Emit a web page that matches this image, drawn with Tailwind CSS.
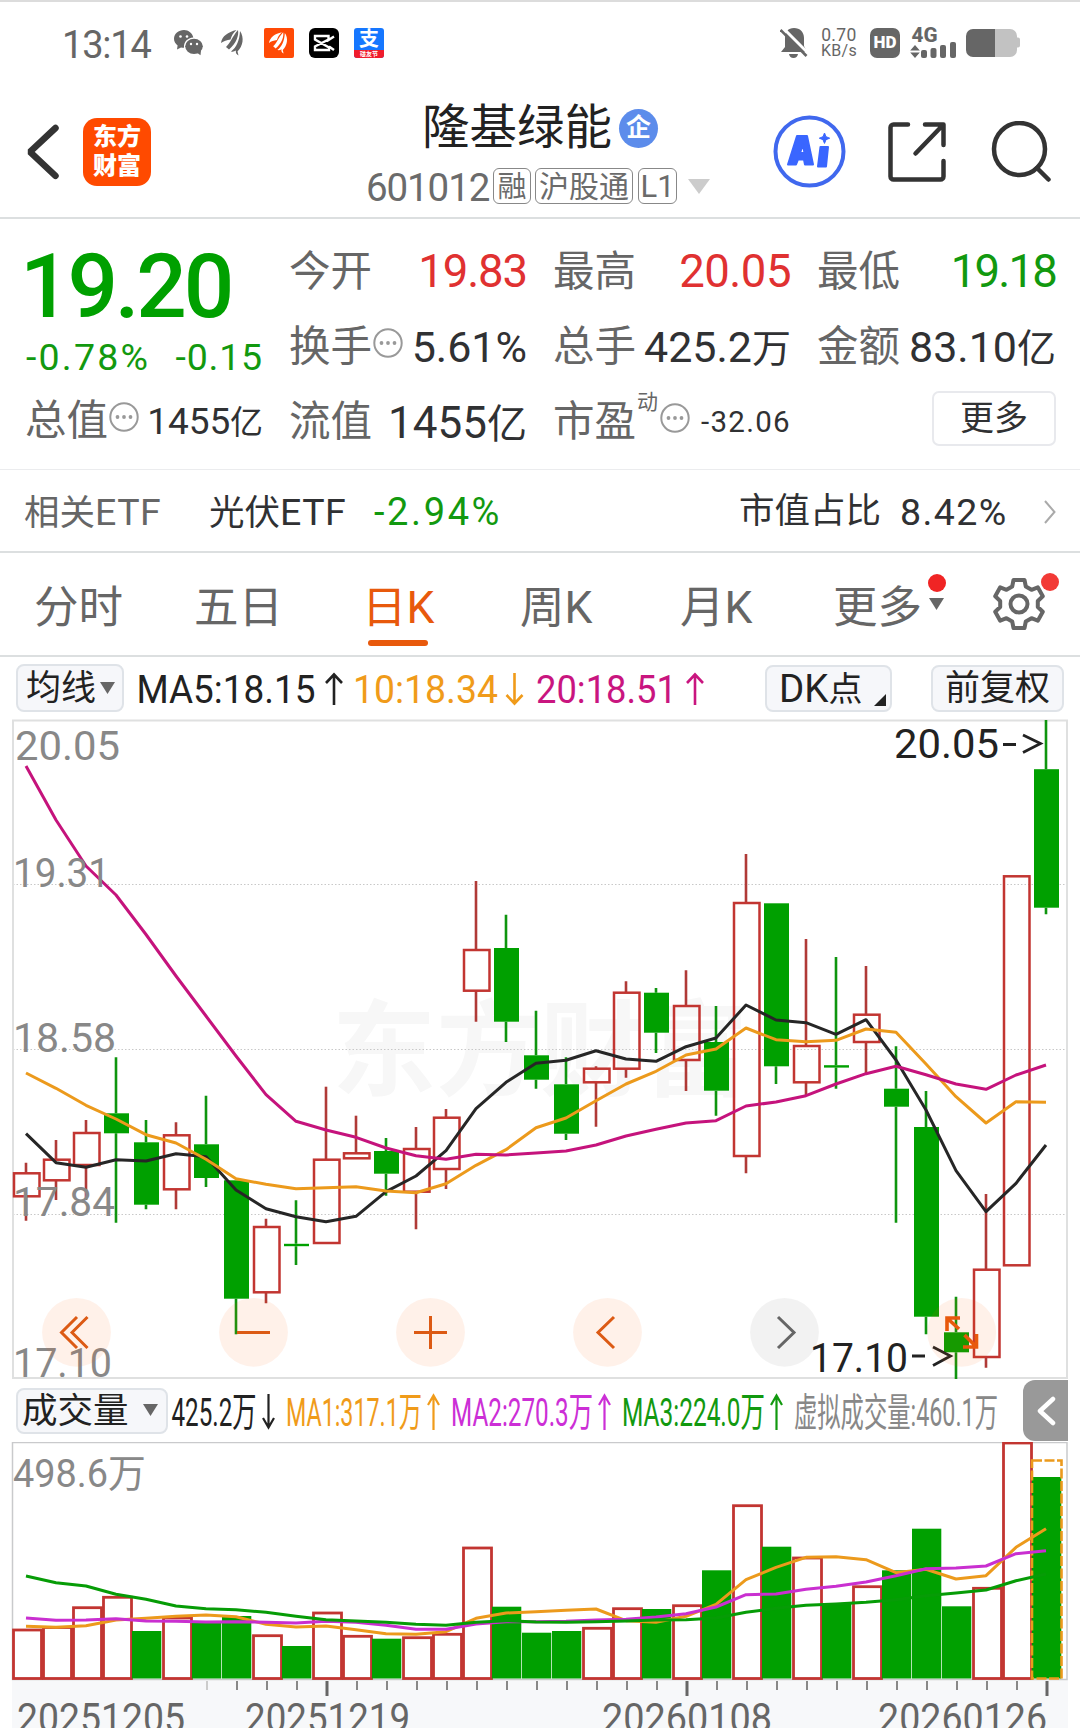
<!DOCTYPE html>
<html lang="zh-CN">
<head>
  <meta charset="UTF-8" />
  <meta name="viewport" content="width=device-width, initial-scale=1.0"/>
  <title>隆基绿能 601012</title>
  <script src="https://cdn.jsdelivr.net/npm/@tailwindcss/browser@4"></script>
</head>
<body class="w-[1080px] h-[1728px] overflow-hidden bg-white [font-family:Roboto,'Noto_Sans_CJK_SC',sans-serif] text-[#303133]">

  <!-- Status bar -->
  <div class="h-[84px] border-t-2 border-[#dcdcdc] flex items-center pl-[62px] pr-[60px] text-[#666]">
    <span class="text-[38px] leading-none tracking-[-1.2px] w-[112px] pt-[3px]">13:14</span>
    <!-- chat -->
    <svg class="w-[29px] h-[26px]" viewBox="0 0 29 26">
      <path fill="#666" d="M10 0C4.500 0 0 3.900 0 8.800c0 2.700 1.400 5 3.600 6.600L3 19.500l4-2.100c1 .3 2 .4 3 .4C9.500 12 13.500 8 19.300 7.600 18.500 3.200 14.500 0 10 0z"/>
      <ellipse cx="20" cy="16.300" rx="8.800" ry="7.600" fill="#666"/>
      <path fill="#666" d="M22 22l4.500 3.300.5-5z"/>
      <g fill="#fff"><circle cx="6.500" cy="6.500" r="1.300"/><circle cx="13" cy="6.500" r="1.300"/><circle cx="17" cy="14" r="1.200"/><circle cx="23" cy="14" r="1.200"/></g>
    </svg>
    <!-- feather -->
    <svg class="w-[24px] h-[26px] ml-[18px]" viewBox="0 0 24 26">
      <g fill="#666"><path d="M0 13C1 6 7 2 15.500 0 12 3 10.500 6 9.500 9.500 6 10 2.500 11 0 13z"/><path d="M5 17C9.500 13 11.500 6 17 0 18 5.500 15.500 13 8 19.500z"/><path d="M10 21.500c5.500-4 8.500-11 9-20.500 4.500 6.500 3 15-2.500 20.500l1 4c-2-1-3.200-3-2.500-5-1.500 1-3.200 1.500-5 1z"/></g>
    </svg>
    <span class="w-[30px] h-[30px] ml-[19px] bg-[#ff4a06] rounded-[2px] flex items-center justify-center">
      <svg class="w-[20px] h-[22px]" viewBox="0 0 24 26">
        <g fill="#fff"><path d="M0 13C1 6 7 2 15.500 0 12 3 10.500 6 9.500 9.500 6 10 2.500 11 0 13z"/><path d="M5 17C9.500 13 11.500 6 17 0 18 5.500 15.500 13 8 19.500z"/><path d="M10 21.500c5.500-4 8.500-11 9-20.500 4.500 6.500 3 15-2.500 20.500l1 4c-2-1-3.200-3-2.500-5-1.500 1-3.200 1.500-5 1z"/></g>
      </svg>
    </span>
    <svg class="w-[30px] h-[30px] ml-[15px]" viewBox="0 0 30 30">
      <rect width="30" height="30" rx="6" fill="#000"/>
      <path d="M25 8.500L19.500 12V8H6v3.500l14 8V22H6v-3.500l13.500-7M20 18.500l5 3.500" fill="none" stroke="#fff" stroke-width="2.400"/>
    </svg>
    <span class="w-[30px] h-[30px] ml-[15px] rounded-[3px] bg-[#1677ff] overflow-hidden flex flex-col items-center">
      <span class="text-white text-[20px] font-bold leading-[22px]">支</span>
      <span class="w-full h-[8px] bg-[#f01c2c] text-white text-[6px] font-bold leading-[7px] text-center">碰友节</span>
    </span>

    <!-- muted bell -->
    <svg class="w-[28px] h-[30px] ml-auto" viewBox="0 0 28 30">
      <path fill="#666" d="M14 0c6 0 10 4 10 10v8l3 6H1l4-5v-9C5 4 8 0 14 0zM9 26h9c-.5 2.500-2 4-4.500 4S9.500 28.500 9 26z"/>
      <path d="M2-1l26 26" stroke="#fff" stroke-width="3"/>
      <path d="M.5 2l26 26" stroke="#666" stroke-width="2.600"/>
    </svg>
    <span class="ml-[13px] w-[36px] text-[17.500px] leading-[16px] text-center tracking-[.4px]"><span class="block">0.70</span><span class="block text-[16px] tracking-[.3px]">KB/s</span></span>
    <span class="ml-[13px] w-[30px] h-[30px] rounded-[7px] bg-[#666] text-white text-[17px] font-black flex items-center justify-center">HD</span>
    <svg class="w-[47px] h-[30px] ml-[10px] overflow-visible" viewBox="0 0 47 30" fill="#666">
      <text x="1.500" y="14" font-size="19.500" font-weight="800" textLength="26" lengthAdjust="spacingAndGlyphs">4G</text>
      <path d="M5 17l4.800 5.500H.2zM5 30l-4.800-5.500h9.600z"/>
      <rect x="11" y="22" width="6" height="8" rx="2"/><rect x="20.500" y="20" width="6" height="10" rx="2"/><rect x="30" y="17" width="6" height="13" rx="2"/><rect x="40" y="14" width="6" height="16" rx="2"/>
    </svg>
    <svg class="w-[54px] h-[28px] ml-[9px]" viewBox="0 0 54 28">
      <path d="M7 0h37a7 7 0 017 7v1.500h1a2 2 0 012 2v6a2 2 0 01-2 2h-1V21a7 7 0 01-7 7H7z" fill="#c2c2c2"/>
      <path d="M7 0h22v28H7a7 7 0 01-7-7V7a7 7 0 017-7z" fill="#666"/>
    </svg>
  </div>

  <!-- Header -->
  <header class="h-[135px] border-b-2 border-[#dcdfe0] flex items-start pl-[26px] pr-[29px]">
    <svg class="w-[33px] h-[56px] mt-[40px]" viewBox="0 0 33 56" fill="none" stroke="#333" stroke-width="6.500" stroke-linecap="round" stroke-linejoin="bevel"><path d="M29.500 4L4 27.800l25.500 24"/></svg>
    <div class="w-[68px] h-[68px] mt-[34px] ml-[24px] rounded-[14px] bg-[#ff4a00] text-white text-[24px] leading-[29px] font-black text-center pt-[5px]">东方<br>财富</div>

    <div class="ml-[215px] w-[350px] mt-[11px]">
      <div class="flex items-center h-[66px] pl-[56px]">
        <h1 class="text-[47.500px] leading-none text-[#222] pt-[2px]">隆基绿能</h1>
        <span class="ml-[7px] w-[39px] h-[39px] rounded-full bg-[#5c8ceb] text-white text-[25px] font-bold leading-[37px] text-center">企</span>
      </div>
      <div class="flex items-center h-[36px] mt-[7px] text-[#6b6b6b]">
        <span class="text-[38.500px] leading-none tracking-[-1.1px] w-[127px] pt-[4px]">601012</span>
        <span class="h-[36px] w-[38px] border border-[#888] rounded-[6px] text-[29px] leading-[36px] text-center">融</span>
        <span class="ml-[4px] h-[36px] w-[98px] border border-[#888] rounded-[6px] text-[30px] leading-[36px] text-center">沪股通</span>
        <span class="ml-[5px] h-[36px] w-[39px] border border-[#888] rounded-[6px] text-[31px] leading-[36px] text-center">L1</span>
        <svg class="w-[22px] h-[15px] ml-[11px]" viewBox="0 0 22 15"><path d="M0 0h22L11 15z" fill="#ccc"/></svg>
      </div>
    </div>

    <svg class="w-[73px] h-[73px] mt-[31px] ml-auto" viewBox="0 0 73 73">
      <circle cx="36.500" cy="36.500" r="34" fill="none" stroke="#4068ee" stroke-width="4"/>
      <g fill="#3a66ff" stroke="#3a66ff" stroke-width="2" stroke-linejoin="round">
        <path fill-rule="evenodd" d="M24 21h10l6 28.500h-8l-1-5h-6l-2 5h-8zM30 29.500l-3 8.500h4.500z"/>
        <path d="M47.500 32h7.500l-2 19.500h-8z"/>
        <path d="M51.500 18l1.500 3.700 3.700 1.500-3.700 1.500-1.500 3.700-1.500-3.700-3.700-1.500 3.700-1.500z" stroke-width="1"/>
      </g>
    </svg>
    <svg class="w-[58px] h-[60px] mt-[38px] ml-[42px]" viewBox="0 0 58 60" fill="none" stroke="#333" stroke-width="4.500" stroke-linecap="round" stroke-linejoin="round"><path d="M20 2.500H5.500a3 3 0 00-3 3v49a3 3 0 003 3h47a3 3 0 003-3V39M37 2.500h18.500V23M54 4L27.500 31.500"/></svg>
    <svg class="w-[60px] h-[62px] mt-[37px] ml-[45px]" viewBox="0 0 60 62" fill="none" stroke="#333" stroke-width="4.500" stroke-linecap="round"><ellipse cx="28.500" cy="28" rx="25.500" ry="26"/><path d="M46 47l11.500 11.500"/></svg>
  </header>

  <!-- Quote summary -->
  <section class="h-[251px] border-b border-[#ebecee] grid grid-cols-[238px_238px_238px_239px] gap-x-[26px] pl-[25px] pt-[16px] text-[41.500px]">
    <div>
      <div class="h-[105px] text-[89px] leading-[104px] font-medium text-[#00a000] tracking-[-3.200px] -ml-[5px]">19.20</div>
      <div class="flex justify-between text-[37.500px] leading-[34px] text-[#12990f] pl-[1px]"><span class="tracking-[2.200px]">-0.78%</span><span class="tracking-[.8px]">-0.15</span></div>
      <div class="flex items-center h-[74px] mt-[10px]">
        <span class="text-[#666] leading-none">总值</span>
        <svg class="w-[30px] h-[30px] ml-[1px] mb-[9px]" viewBox="0 0 30 30"><circle cx="15" cy="15" r="13.700" fill="none" stroke="#999" stroke-width="2"/><g fill="#999"><circle cx="8.500" cy="15" r="1.900"/><circle cx="15" cy="15" r="1.900"/><circle cx="21.500" cy="15" r="1.900"/></g></svg>
        <span class="ml-auto text-[37px] leading-none whitespace-nowrap tracking-[-.1px]">1455<span class="text-[33px]">亿</span></span>
      </div>
    </div>

    <div class="[&>div]:flex [&>div]:items-center [&>div]:justify-between [&>div]:h-[75px]">
      <div><span class="text-[#666]">今开</span><span class="text-[45.500px] text-[#e03131] tracking-[-1.100px]">19.83</span></div>
      <div>
        <span class="text-[#666]">换手</span>
        <svg class="w-[30px] h-[30px] ml-[1px] mb-[9px]" viewBox="0 0 30 30"><circle cx="15" cy="15" r="13.700" fill="none" stroke="#999" stroke-width="2"/><g fill="#999"><circle cx="8.500" cy="15" r="1.900"/><circle cx="15" cy="15" r="1.900"/><circle cx="21.500" cy="15" r="1.900"/></g></svg>
        <span class="text-[43px] ml-auto">5.61%</span>
      </div>
      <div><span class="text-[#666]">流值</span><span class="text-[44px]">1455<span class="text-[40px]">亿</span></span></div>
    </div>

    <div class="[&>div]:flex [&>div]:items-center [&>div]:justify-between [&>div]:h-[75px]">
      <div><span class="text-[#666]">最高</span><span class="text-[45.500px] text-[#e03131] tracking-[-.5px]">20.05</span></div>
      <div><span class="text-[#666]">总手</span><span class="text-[43px]">425.2<span class="text-[39px]">万</span></span></div>
      <div>
        <span class="text-[#666]">市盈</span><span class="text-[#666] text-[21px] leading-none mb-[40px] ml-[1px]">动</span>
        <svg class="w-[30px] h-[30px] ml-[2px] mb-[9px]" viewBox="0 0 30 30"><circle cx="15" cy="15" r="13.700" fill="none" stroke="#999" stroke-width="2"/><g fill="#999"><circle cx="8.500" cy="15" r="1.900"/><circle cx="15" cy="15" r="1.900"/><circle cx="21.500" cy="15" r="1.900"/></g></svg>
        <span class="text-[29.500px] tracking-[1.300px] ml-auto">-32.06</span>
      </div>
    </div>

    <div class="[&>div]:flex [&>div]:items-center [&>div]:justify-between [&>div]:h-[75px]">
      <div><span class="text-[#666]">最低</span><span class="text-[45.500px] text-[#12990f] tracking-[-1.800px]">19.18</span></div>
      <div><span class="text-[#666]">金额</span><span class="text-[43px]">83.10<span class="text-[39px]">亿</span></span></div>
      <div><button class="ml-auto w-[124px] h-[55px] mb-[8px] border-2 border-[#e8e9ed] rounded-[7px] text-[34px] leading-none pb-[2px]">更多</button></div>
    </div>
  </section>

  <!-- Related ETF -->
  <section class="h-[83px] border-b-2 border-[#dcdfe0] flex items-center pl-[24px] pr-[24px] pt-[3px] text-[35.500px]">
    <span class="text-[#666] w-[185px] whitespace-nowrap">相关<span class="text-[37.500px] tracking-[.5px]">ETF</span></span>
    <span class="w-[165px] whitespace-nowrap">光伏<span class="text-[37.500px] tracking-[.5px]">ETF</span></span>
    <span class="text-[38px] text-[#12990f] tracking-[2.600px]">-2.94%</span>
    <span class="ml-auto w-[161px]">市值占比</span>
    <span class="text-[37.500px] tracking-[1.400px] w-[144px]">8.42%</span>
    <svg class="w-[12px] h-[24px]" viewBox="0 0 12 24" fill="none" stroke="#aaa" stroke-width="2"><path d="M1 1l9.500 11L1 23"/></svg>
  </section>

  <!-- Period tabs -->
  <nav class="h-[104px] border-b-2 border-[#dcdfe0] flex items-center text-[44.500px] text-[#666] pl-[34px] [&>span]:leading-[64px] [&>span]:pt-[7px]">
    <span class="w-[160px]">分时</span>
    <span class="w-[168px]">五日</span>
    <span class="w-[158px] text-[#e8590c] relative">日K<i class="absolute left-[6px] -bottom-[6px] w-[60px] h-[6px] rounded-full bg-[#e8590c]"></i></span>
    <span class="w-[160px]">周K</span>
    <span class="w-[153px]">月K</span>
    <span class="w-[160px] relative">更多
      <i class="absolute left-[95px] top-[5px] w-[18px] h-[18px] rounded-full bg-[#f02424]"></i>
      <svg class="absolute left-[96px] top-[29px] w-[15px] h-[12px]" viewBox="0 0 15 12"><path d="M0 0h15L7.500 12z" fill="#666"/></svg>
    </span>
    <div class="relative">
      <svg class="w-[52px] h-[54px]" viewBox="-26 -27 52 54" fill="none" stroke="#666" stroke-width="4"><circle r="8.500"/><path stroke-linejoin="round" d="M-5.500-24h11l1.300 6.500 5.700 3.300 6.300-2.500 5 9-5 4.700v6l5 4.700-5 9-6.300-2.500-5.700 3.300L5.500 24h-11l-1.300-6.500-5.700-3.300-6.300 2.500-5-9 5-4.700v-6l-5-4.700 5-9 6.300 2.500 5.700-3.300z"/></svg>
      <i class="absolute left-[48px] -top-[4px] w-[18px] h-[18px] rounded-full bg-[#f23a36]"></i>
    </div>
  </nav>

  <!-- Moving average row -->
  <div class="h-[62px] flex items-center pl-[16px] text-[35px] text-[#222]">
    <button class="w-[108px] h-[48px] border-2 border-[#dfe3e8] bg-[#f6f7fa] rounded-[8px] flex items-center pl-[8px] pt-[2px]">均线
      <svg class="w-[15px] h-[12px] ml-[4px] mb-[3px] shrink-0" viewBox="0 0 15 12"><path d="M0 0h15L7.500 12z" fill="#666"/></svg>
    </button>
    <svg class="w-[580px] h-[62px] ml-[12px] mr-[49px]" viewBox="136 658 580 62" font-size="38.500" fill="none" stroke-width="2.600">
      <g fill="#222"><text x="136.500" y="704" textLength="179" lengthAdjust="spacingAndGlyphs">MA5:18.15</text></g>
      <path d="M334 706V676M326 684l8-8.500 8 8.500" stroke="#222"/>
      <g fill="#f09b1a"><text x="353" y="704" textLength="145" lengthAdjust="spacingAndGlyphs">10:18.34</text></g>
      <path d="M514.500 674v30M506.500 696l8 8.500 8-8.500" stroke="#f09b1a"/>
      <g fill="#c9157f"><text x="536" y="704" textLength="141" lengthAdjust="spacingAndGlyphs">20:18.51</text></g>
      <path d="M695 706V676M687 684l8-8.500 8 8.500" stroke="#c9157f"/>
    </svg>
    <button class="w-[127px] h-[47px] border-2 border-[#dfe3e8] bg-[#f6f7fa] rounded-[8px] flex items-center pl-[12px] pt-[2px] relative"><span class="text-[38.500px]">DK</span><span class="text-[34px]">点</span>
      <svg class="absolute right-[4px] bottom-[4px] w-[12px] h-[12px]" viewBox="0 0 12 12"><path d="M12 0v12H0z" fill="#222"/></svg>
    </button>
    <button class="ml-[39px] w-[133px] h-[47px] border-2 border-[#dfe3e8] bg-[#f6f7fa] rounded-[8px] leading-none pt-[1px]">前复权</button>
  </div>

  <!-- Candlestick chart -->
  <svg id="kline" class="block w-[1080px] h-[660px]" viewBox="0 719 1080 660"></svg>

  <!-- Volume row -->
  <div class="h-[63px] flex items-center pl-[16px] text-[35.500px] text-[#222]">
    <button class="w-[152px] h-[46px] border-2 border-[#dfe3e8] bg-[#f6f7fa] rounded-[8px] flex items-center pl-[4px] pt-[2px] whitespace-nowrap">成交量
      <svg class="w-[15px] h-[12px] ml-[14px] mb-[3px] shrink-0" viewBox="0 0 15 12"><path d="M0 0h15L7.500 12z" fill="#666"/></svg>
    </button>
    <svg class="w-[850px] h-[63px] ml-[2px]" viewBox="170 1379 850 63" font-size="39.500" fill="none" stroke-width="2.200">
      <g fill="#222"><text x="171.500" y="1426" textLength="85" lengthAdjust="spacingAndGlyphs">425.2万</text></g>
      <path d="M268.500 1394v33M263 1418l5.500 9.500 5.500-9.500" stroke="#222"/>
      <g fill="#f09b1a"><text x="286" y="1426" textLength="136" lengthAdjust="spacingAndGlyphs">MA1:317.1万</text></g>
      <path d="M433.500 1430v-33M428 1405l5.500-9.500 5.500 9.500" stroke="#f09b1a"/>
      <g fill="#cc2fd6"><text x="451" y="1426" textLength="142" lengthAdjust="spacingAndGlyphs">MA2:270.3万</text></g>
      <path d="M604.500 1430v-33M599 1405l5.500-9.500 5.500 9.500" stroke="#cc2fd6"/>
      <g fill="#12990f"><text x="622" y="1426" textLength="143" lengthAdjust="spacingAndGlyphs">MA3:224.0万</text></g>
      <path d="M776.500 1430v-33M771 1405l5.500-9.500 5.500 9.500" stroke="#12990f"/>
      <g fill="#888"><text x="794" y="1426" font-size="39" textLength="204" lengthAdjust="spacingAndGlyphs">虚拟成交量:460.1万</text></g>
    </svg>
    <span class="ml-[3px] w-[45px] h-[61px] rounded-l-[12px] bg-[#999] flex items-center justify-center">
      <svg class="w-[20px] h-[30px]" viewBox="0 0 20 30" fill="none" stroke="#fff" stroke-width="4.500" stroke-linecap="round" stroke-linejoin="round"><path d="M17 3L4 15l13 12"/></svg>
    </span>
  </div>

  <!-- Volume chart and dates -->
  <svg id="volume" class="block w-[1080px] h-[286px]" viewBox="0 1442 1080 286"></svg>

  <script>
    const RED = "#c23531", GREEN = "#00a000";
    const cx = i => 26 + i * 30;

    // [up, body top, body bottom, high, low]
    const candles = [
      [1,1173.3,1196.3,1162.7,1220.7],[1,1159.7,1180.3,1140,1200],[1,1133,1165,1120,1200],[0,1113.3,1133.3,1057.3,1222.7],
      [0,1142.3,1204.7,1120,1209.3],[1,1135.3,1189.3,1122.3,1209.3],[0,1144.3,1178,1095.7,1187],[0,1180.3,1298.7,1180.3,1334.3],
      [1,1227,1292.3,1218.7,1303.3],[0,1243.8,1246.2,1200.3,1265],[1,1159.7,1243,1086.7,1243],[1,1153.3,1158.3,1115.7,1158.3],
      [0,1151,1173.7,1138,1195.7],[1,1149,1191.7,1127,1229.3],[1,1117.7,1169,1109,1189],[1,950,990.7,881,1021.7],
      [0,948,1021.7,914.7,1042],[0,1055.3,1079.7,1010.7,1088.7],[0,1084.3,1133.7,1057.3,1140],[1,1068.7,1082.3,1066.3,1126.7],
      [1,992.7,1068.7,981.3,1077.7],[0,992.7,1032.7,988,1053],[1,1006,1060,970.3,1091],[0,1042,1090.7,1006,1115.7],
      [1,903,1156,854,1173.3],[0,903.3,1066.3,903.3,1084],[1,1046,1082.3,939,1095.3],[0,1065.2,1067.6,957,1088.7],
      [1,1014.7,1042,966,1073.3],[0,1088.7,1106.7,1046.3,1222.7],[0,1127,1316.7,1091,1334.3],[0,1332.3,1352.3,1296.7,1379],
      [1,1269.7,1357,1194,1367.7],[1,876.3,1265.3,876.3,1265.3],[0,769.2,907.7,720,914.3]
    ];
    const ma5 = [1133.7,1162.7,1167.3,1159.7,1161,1153.7,1156.7,1190,1208.7,1216.7,1221.7,1216.3,1191.7,1176,1150.7,1108.7,1082.3,1063.3,1060.3,1050.7,1059,1061.3,1046.7,1038,1005,1020,1022.7,1034.3,1019.7,1060,1110,1170.7,1211.7,1183.3,1145];
    const ma10 = [1073,1088.3,1105.3,1119,1134.7,1143,1159.3,1178.7,1184.3,1188.7,1187.7,1186.7,1191,1192.7,1183.7,1165.3,1149.7,1127.7,1118,1100.7,1084,1071.3,1055,1049,1028,1039.7,1041.7,1040.3,1029,1032.3,1064,1096.7,1123,1101.7,1102.3];
    const ma20 = [766,820,866,895,934.5,976,1016,1056,1094.7,1121.3,1130,1137.3,1148,1155.7,1159.3,1154.3,1155,1153,1151,1145,1136,1129.3,1123,1120.7,1106,1102,1095.7,1084,1073.7,1066.3,1074.7,1084,1089.3,1075,1065];

    const line = (ys, color) => `<polyline fill="none" stroke="${color}" stroke-width="3" stroke-linejoin="round" points="${ys.map((y, i) => cx(i) + "," + y).join(" ")}"/>`;
    const label = (x, y, w, str, color, size = 40) => `<text x="${x}" y="${y}" font-size="${size}" fill="${color}" textLength="${w}" lengthAdjust="spacingAndGlyphs">${str}</text>`;

    let k = `<text x="332" y="1088" font-size="104" font-weight="700" fill="#f7f7f7">东方财富</text>`;
    [884.5, 1049.5, 1214.5].forEach(y => k += `<path d="M13 ${y}H1067" stroke="#c8c8c8" stroke-dasharray="1.5 2"/>`);
    k += `<path d="M13 720.5H1067V1378H13z" fill="none" stroke="#dfe0e0" stroke-width="2"/>`;
    candles.forEach(([up, top, bottom, high, low], i) => {
      const x = cx(i), c = up ? RED : GREEN;
      k += `<path d="M${x} ${high}V${top}M${x} ${bottom}V${low}" stroke="${up ? "#b03a37" : "#0f950f"}" stroke-width="2.6"/>`;
      k += up
        ? `<rect x="${x - 12}" y="${top}" width="25.5" height="${bottom - top}" fill="none" stroke="${c}" stroke-width="2.5"/>`
        : `<rect x="${x - 12}" y="${top}" width="25" height="${bottom - top}" fill="${c}"/>`;
    });
    k += line(ma5, "#262626") + line(ma10, "#ec9a1c") + line(ma20, "#c5137c");
    k += label(15, 760, 105, "20.05", "#888") + label(13, 887, 97, "19.31", "#888") + label(13, 1051.5, 103, "18.58", "#888");
    k += label(13, 1215.5, 102, "17.84", "#888") + label(13, 1376.5, 99, "17.10", "#888");
    k += label(894, 757.5, 105, "20.05", "#222") + label(810, 1371.5, 98, "17.10", "#222");
    k += `<path d="M1003 744.500h13M1023 735l17.500 8.500-17.500 9M912 1356h13M933 1347l17.500 9-17.500 9.500" fill="none" stroke="#222" stroke-width="2.8"/>`;
    // round chart controls
    [76.5, 253.5, 430.5, 607.5, 784.5, 961.7].forEach((x, i) => k += `<circle cx="${x}" cy="1332.300" r="34.400" fill="${i === 4 ? "#000" : "#ff5a00"}" fill-opacity="${i === 4 ? .05 : .085}"/>`);
    k += `<g fill="none" stroke="#dc5a14" stroke-width="3"><path d="M77 1317L61.500 1332.500 77 1348M87.500 1317L72 1332.500l15.500 15.500"/><path d="M237 1332.500h33M414 1332.500h33M430.500 1316v33"/><path d="M614 1317L598 1332.500 614 1348"/><path d="M778 1317l16 15.500-16 15.500" stroke="#666"/>`;
    k += `<path stroke-width="3.600" stroke="#e8590c" d="M960 1318H947v13M947 1318l12 11M963 1347h13.500v-13M976.500 1347l-12-12"/></g>`;
    document.getElementById("kline").innerHTML = k;

    // [up, bar top]
    const bars = [[1,1630],[1,1627.5],[1,1607.7],[1,1597.3],[0,1631],[1,1618],[0,1622.3],[0,1616],[1,1635.7],[0,1646],[1,1613],[1,1636.3],[0,1638.7],[1,1637.7],[1,1634.3],[1,1548],[0,1606.7],[0,1632.7],[0,1631],[1,1628.3],[1,1608.7],[0,1609],[1,1605.7],[0,1570.3],[1,1505.7],[0,1546.7],[1,1558],[0,1603.7],[1,1586.7],[0,1570.3],[0,1528.7],[0,1606.3],[1,1588.3],[1,1443],[0,1477]];
    const vma1 = [1626.3,1627.3,1625.7,1620,1618.3,1616.3,1615,1616.7,1624.3,1627,1626,1629.7,1633.7,1634.3,1631.7,1618.3,1613,1611.7,1610.3,1609,1620.7,1622.3,1616.3,1604.3,1579.7,1567.3,1557.3,1556.7,1559.7,1572.7,1569.3,1579,1575.7,1547.3,1528.7];
    const vma2 = [1618,1620.3,1620,1618.7,1621,1621.3,1622,1621.7,1622.3,1623,1621.3,1622.3,1625.3,1629.3,1629.3,1624,1621.7,1621.7,1621.3,1620,1619.3,1617,1613.7,1607,1594.7,1594,1589.3,1586.3,1582,1575.7,1568.7,1568,1566,1553.7,1550.7];
    const vma3 = [1576,1582.7,1586,1594.3,1599.3,1606,1608.7,1609.7,1612.3,1616.3,1619.7,1621,1622.3,1624.3,1625.3,1622.3,1620.7,1622,1622.3,1621.7,1621,1620,1619.7,1618,1612.3,1608.3,1605.3,1604,1602.3,1599.7,1595.7,1593,1590,1580.7,1574];

    let v = `<rect x="12" y="1679" width="1056" height="49" fill="#f7f8fa"/><path d="M12.500 1679.500V1442.500H1067V1679.500z" fill="none" stroke="#c9cacc" stroke-width="1.5"/>`;
    bars.forEach(([up, top], i) => {
      const x = cx(i);
      v += up
        ? `<rect x="${x - 12.5}" y="${top}" width="28" height="${1678.5 - top}" fill="none" stroke="${RED}" stroke-width="2.8"/>`
        : `<rect x="${x - 14}" y="${top}" width="29.300" height="${1678.5 - top}" fill="${GREEN}"/>`;
    });
    v += `<rect x="1032" y="1460.500" width="29.500" height="218" fill="none" stroke="#ec9a1c" stroke-width="2.600" stroke-dasharray="10 2.500"/>`;
    v += line(vma1, "#ec9a1c") + line(vma2, "#c92fd0") + line(vma3, "#069c06");
    v += label(13, 1487, 133, "498.6万", "#888", 39);
    for (let i = 6; i < 35; i++) {
      const big = i === 10 || i === 22 || i === 34;
      v += `<path d="M${cx(i) + 1} 1681V${big ? 1696 : 1690}" stroke="${i === 6 ? "#ccc" : big ? "#666" : "#888"}" stroke-width="${big ? 3 : 2}"/>`;
    }
    v += label(17, 1732, 168, "20251205", "#666") + label(245, 1732, 165, "20251219", "#666") + label(602, 1732, 170, "20260108", "#666") + label(878, 1732, 169, "20260126", "#666");
    document.getElementById("volume").innerHTML = v;
  </script>

</body>
</html>
